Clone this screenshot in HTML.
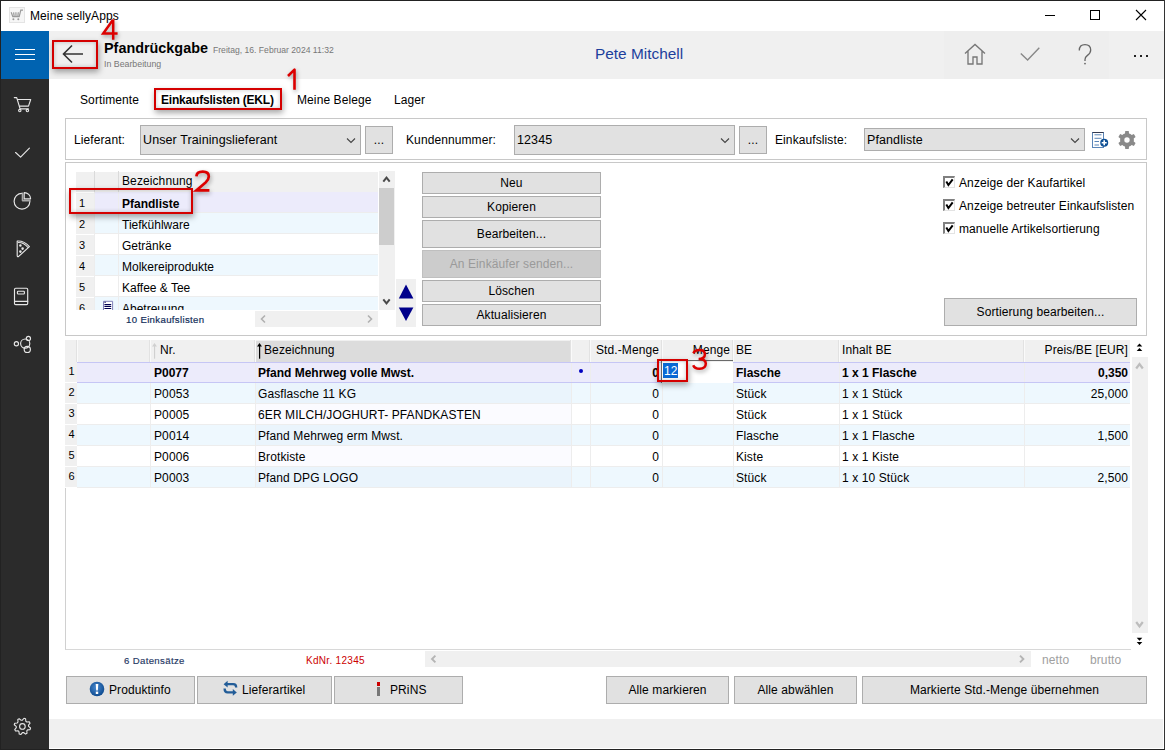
<!DOCTYPE html><html><head><meta charset="utf-8"><style>
html,body{margin:0;padding:0;width:1165px;height:750px;overflow:hidden;}
body{position:relative;font-family:"Liberation Sans", sans-serif;}
body>div{position:absolute;}
</style></head><body>
<div style="left:0px;top:0px;width:1165px;height:750px;background:#fff;"></div>
<svg style="position:absolute;left:9px;top:7px;" width="16" height="16" viewBox="0 0 16 16"><rect x="0.5" y="0.5" width="15" height="15" fill="#f6f6f6" stroke="#e4e4e4"/><path d="M2.2 5.3 L3.8 9.6 L10.2 9.6 L11.8 3.2 L14 3.2 M4.6 5.3 L5.2 9.6 M6.9 5.3 L7 9.6 M9.3 5.3 L8.8 9.6" stroke="#9a9a9a" stroke-width="1.2" fill="none"/><circle cx="4.4" cy="12.2" r="1" fill="#9a9a9a"/><circle cx="9.3" cy="12.2" r="1" fill="#9a9a9a"/></svg>
<div style="left:30px;top:10.00px;font-size:12px;line-height:12px;color:#000;white-space:pre;letter-spacing:0.1px;">Meine sellyApps</div>
<div style="left:1045px;top:15px;width:10px;height:1px;background:#000;"></div>
<div style="left:1090px;top:10px;width:10px;height:10px;border:1px solid #000;box-sizing:border-box;"></div>
<svg style="position:absolute;left:1135px;top:9px;" width="12" height="12" viewBox="0 0 12 12"><path d="M1 1 L11 11 M11 1 L1 11" stroke="#000" stroke-width="1.1"/></svg>
<div style="left:1px;top:31px;width:1163px;height:48px;background:#f0f0f0;"></div>
<div style="left:944px;top:31px;width:165px;height:48px;background:#eeeeee;"></div>
<div style="left:1px;top:31px;width:48px;height:48px;background:#0063b1;"></div>
<div style="left:15px;top:49px;width:20px;height:1px;background:#fff;"></div>
<div style="left:15px;top:54px;width:20px;height:1px;background:#fff;"></div>
<div style="left:15px;top:59px;width:20px;height:1px;background:#fff;"></div>
<svg style="position:absolute;left:60px;top:41px;" width="28" height="26" viewBox="0 0 28 26"><path d="M4 13 L23 13 M12 4.5 L3.5 13 L12 21.5" stroke="#333" stroke-width="1.6" fill="none"/></svg>
<div style="left:104px;top:40.80px;font-size:14.4px;line-height:14.4px;font-weight:bold;color:#000;white-space:pre;">Pfandrückgabe</div>
<div style="left:213px;top:45.70px;font-size:8.6px;line-height:8.6px;color:#777;white-space:pre;">Freitag, 16. Februar 2024 11:32</div>
<div style="left:104px;top:59.60px;font-size:8.8px;line-height:8.8px;color:#777;white-space:pre;">In Bearbeitung</div>
<div style="left:595px;top:46.40px;font-size:15.4px;line-height:15.4px;color:#1d3f9c;white-space:pre;">Pete Mitchell</div>
<svg style="position:absolute;left:962px;top:42px;" width="26" height="25" viewBox="0 0 26 25"><path d="M3 11.5 L13 2.5 L23 11.5 M6 9 L6 22 L11 22 L11 15 L15 15 L15 22 L20 22 L20 9" stroke="#777" stroke-width="1.35" fill="none" stroke-linejoin="miter"/></svg>
<svg style="position:absolute;left:1019px;top:45px;" width="22" height="17" viewBox="0 0 22 17"><path d="M1.8 8.4 L8.6 15 L20.3 2.8" stroke="#888" stroke-width="1.4" fill="none"/></svg>
<svg style="position:absolute;left:1074px;top:40px;" width="22" height="28" viewBox="0 0 22 28"><path d="M5.3 10.5 Q5.3 4.6 11 4.6 Q16.7 4.6 16.7 10 Q16.7 13.2 13.2 15.6 Q11 17.2 11 19.5 L11 21" stroke="#666" stroke-width="1.3" fill="none"/><circle cx="11" cy="23.6" r="0.9" fill="#666"/></svg>
<div style="left:1134px;top:55px;width:2px;height:2px;background:#222;"></div>
<div style="left:1140px;top:55px;width:2px;height:2px;background:#222;"></div>
<div style="left:1146px;top:55px;width:2px;height:2px;background:#222;"></div>
<div style="left:1px;top:79px;width:48px;height:670px;background:#2b2b2b;"></div>
<div style="left:49px;top:719px;width:1114px;height:29px;background:#f0f0f0;"></div>
<div style="left:0px;top:0px;width:1165px;height:1px;background:#222;"></div>
<div style="left:0px;top:0px;width:1px;height:750px;background:#222;"></div>
<div style="left:1164px;top:0px;width:1px;height:750px;background:#333;"></div>
<div style="left:0px;top:749px;width:1165px;height:1px;background:#222;"></div>
<div style="left:80px;top:94.00px;font-size:12px;line-height:12px;color:#000;white-space:pre;letter-spacing:0.1px;">Sortimente</div>
<div style="left:161px;top:94.00px;font-size:12px;line-height:12px;font-weight:bold;color:#000;white-space:pre;letter-spacing:-0.2px;">Einkaufslisten (EKL)</div>
<div style="left:297px;top:94.00px;font-size:12px;line-height:12px;color:#000;white-space:pre;letter-spacing:0.1px;">Meine Belege</div>
<div style="left:394px;top:94.00px;font-size:12px;line-height:12px;color:#000;white-space:pre;letter-spacing:0.1px;">Lager</div>
<div style="left:65px;top:118px;width:1082px;height:42px;border:1px solid #c8c8c8;box-sizing:border-box;"></div>
<div style="left:74px;top:134.00px;font-size:12px;line-height:12px;color:#000;white-space:pre;letter-spacing:0.1px;">Lieferant:</div>
<div style="left:140px;top:125px;width:221px;height:30px;background:#e1e1e1;border:1px solid #adadad;box-sizing:border-box;"></div>
<div style="left:143px;top:134.25px;font-size:12.5px;line-height:12.5px;color:#000;white-space:pre;letter-spacing:0.1px;">Unser Trainingslieferant</div>
<svg style="position:absolute;left:346px;top:137.0px;" width="10" height="7" viewBox="0 0 10 7"><path d="M1 1.5 L5 5.5 L9 1.5" stroke="#444" stroke-width="1.1" fill="none"/></svg>
<div style="left:365px;top:126px;width:28px;height:28px;background:#e1e1e1;border:1px solid #adadad;box-sizing:border-box;"></div>
<div style="left:79.0px;width:600px;text-align:center;top:134.00px;font-size:12px;line-height:12px;color:#000;white-space:pre;letter-spacing:0.1px;">...</div>
<div style="left:406px;top:134.00px;font-size:12px;line-height:12px;color:#000;white-space:pre;letter-spacing:0.1px;">Kundennummer:</div>
<div style="left:514px;top:125px;width:221px;height:30px;background:#e1e1e1;border:1px solid #adadad;box-sizing:border-box;"></div>
<div style="left:517px;top:134.25px;font-size:12.5px;line-height:12.5px;color:#000;white-space:pre;letter-spacing:0.1px;">12345</div>
<svg style="position:absolute;left:720px;top:137.0px;" width="10" height="7" viewBox="0 0 10 7"><path d="M1 1.5 L5 5.5 L9 1.5" stroke="#444" stroke-width="1.1" fill="none"/></svg>
<div style="left:739px;top:126px;width:28px;height:28px;background:#e1e1e1;border:1px solid #adadad;box-sizing:border-box;"></div>
<div style="left:453.0px;width:600px;text-align:center;top:134.00px;font-size:12px;line-height:12px;color:#000;white-space:pre;letter-spacing:0.1px;">...</div>
<div style="left:775px;top:134.00px;font-size:12px;line-height:12px;color:#000;white-space:pre;letter-spacing:0.1px;">Einkaufsliste:</div>
<div style="left:864px;top:128px;width:221px;height:23px;background:#e1e1e1;border:1px solid #adadad;box-sizing:border-box;"></div>
<div style="left:867px;top:133.75px;font-size:12.5px;line-height:12.5px;color:#000;white-space:pre;letter-spacing:0.1px;">Pfandliste</div>
<svg style="position:absolute;left:1070px;top:136.5px;" width="10" height="7" viewBox="0 0 10 7"><path d="M1 1.5 L5 5.5 L9 1.5" stroke="#444" stroke-width="1.1" fill="none"/></svg>
<div style="left:65px;top:162px;width:1082px;height:174px;border:1px solid #c8c8c8;box-sizing:border-box;"></div>
<div style="left:76px;top:172px;width:302px;height:20px;background:#f0f0f0;"></div>
<div style="left:94px;top:171px;width:1px;height:21px;background:#dadada;"></div>
<div style="left:118px;top:171px;width:1px;height:21px;background:#dadada;"></div>
<div style="left:122px;top:175.00px;font-size:12px;line-height:12px;color:#000;white-space:pre;letter-spacing:0.1px;">Bezeichnung</div>
<div style="left:76px;top:171px;width:302px;height:139px;overflow:hidden;"><div style="position:absolute;left:18px;top:21px;width:285px;height:21px;background:#ecebfb;"></div><div style="position:absolute;left:0px;top:21px;width:18px;height:21px;background:#f0f0f0;border-top:1px solid #fff;box-sizing:border-box;"></div><div style="position:absolute;left:18px;top:41px;width:285px;height:1px;background:#ededed;"></div><div style="position:absolute;left:18px;top:21px;width:1px;height:21px;background:#ededed;"></div><div style="position:absolute;left:42px;top:21px;width:1px;height:21px;background:#ededed;"></div><div style="position:absolute;left:3px;top:26.5px;font-size:11px;line-height:11px;">1</div><div style="position:absolute;left:46px;top:27px;font-size:12px;line-height:12px;white-space:pre;font-weight:bold;">Pfandliste</div><div style="position:absolute;left:18px;top:42px;width:285px;height:21px;background:#eef8fe;"></div><div style="position:absolute;left:0px;top:42px;width:18px;height:21px;background:#f0f0f0;border-top:1px solid #fff;box-sizing:border-box;"></div><div style="position:absolute;left:18px;top:62px;width:285px;height:1px;background:#ededed;"></div><div style="position:absolute;left:18px;top:42px;width:1px;height:21px;background:#ededed;"></div><div style="position:absolute;left:42px;top:42px;width:1px;height:21px;background:#ededed;"></div><div style="position:absolute;left:3px;top:47.5px;font-size:11px;line-height:11px;">2</div><div style="position:absolute;left:46px;top:48px;font-size:12px;line-height:12px;white-space:pre;">Tiefkühlware</div><div style="position:absolute;left:18px;top:63px;width:285px;height:21px;background:#fff;"></div><div style="position:absolute;left:0px;top:63px;width:18px;height:21px;background:#f0f0f0;border-top:1px solid #fff;box-sizing:border-box;"></div><div style="position:absolute;left:18px;top:83px;width:285px;height:1px;background:#ededed;"></div><div style="position:absolute;left:18px;top:63px;width:1px;height:21px;background:#ededed;"></div><div style="position:absolute;left:42px;top:63px;width:1px;height:21px;background:#ededed;"></div><div style="position:absolute;left:3px;top:68.5px;font-size:11px;line-height:11px;">3</div><div style="position:absolute;left:46px;top:69px;font-size:12px;line-height:12px;white-space:pre;">Getränke</div><div style="position:absolute;left:18px;top:84px;width:285px;height:21px;background:#eef8fe;"></div><div style="position:absolute;left:0px;top:84px;width:18px;height:21px;background:#f0f0f0;border-top:1px solid #fff;box-sizing:border-box;"></div><div style="position:absolute;left:18px;top:104px;width:285px;height:1px;background:#ededed;"></div><div style="position:absolute;left:18px;top:84px;width:1px;height:21px;background:#ededed;"></div><div style="position:absolute;left:42px;top:84px;width:1px;height:21px;background:#ededed;"></div><div style="position:absolute;left:3px;top:89.5px;font-size:11px;line-height:11px;">4</div><div style="position:absolute;left:46px;top:90px;font-size:12px;line-height:12px;white-space:pre;">Molkereiprodukte</div><div style="position:absolute;left:18px;top:105px;width:285px;height:21px;background:#fff;"></div><div style="position:absolute;left:0px;top:105px;width:18px;height:21px;background:#f0f0f0;border-top:1px solid #fff;box-sizing:border-box;"></div><div style="position:absolute;left:18px;top:125px;width:285px;height:1px;background:#ededed;"></div><div style="position:absolute;left:18px;top:105px;width:1px;height:21px;background:#ededed;"></div><div style="position:absolute;left:42px;top:105px;width:1px;height:21px;background:#ededed;"></div><div style="position:absolute;left:3px;top:110.5px;font-size:11px;line-height:11px;">5</div><div style="position:absolute;left:46px;top:111px;font-size:12px;line-height:12px;white-space:pre;">Kaffee &amp; Tee</div><div style="position:absolute;left:18px;top:126px;width:285px;height:21px;background:#eef8fe;"></div><div style="position:absolute;left:0px;top:126px;width:18px;height:21px;background:#f0f0f0;border-top:1px solid #fff;box-sizing:border-box;"></div><div style="position:absolute;left:18px;top:146px;width:285px;height:1px;background:#ededed;"></div><div style="position:absolute;left:18px;top:126px;width:1px;height:21px;background:#ededed;"></div><div style="position:absolute;left:42px;top:126px;width:1px;height:21px;background:#ededed;"></div><div style="position:absolute;left:3px;top:131.5px;font-size:11px;line-height:11px;">6</div><div style="position:absolute;left:46px;top:132px;font-size:12px;line-height:12px;white-space:pre;">Abetreuung</div><svg style="position:absolute;left:21px;top:129px" width="18" height="12" viewBox="0 0 18 12"><path d="M6.5 11 L6.5 1.3 L15.6 1.3 L15.6 11" fill="#fff" stroke="#8080b8" stroke-width="1"/><path d="M7.4 2.3 L8.8 2.3 M7.4 4.5 L14.2 4.5 M7.4 6.4 L14.2 6.4 M7.4 8.5 L14.2 8.5" stroke="#000050" stroke-width="1.1"/><path d="M1.2 11.4 L5.5 10.6" stroke="#7a7a6a" stroke-width="1.6"/></svg></div>
<div style="left:379px;top:171px;width:16px;height:139px;background:#f0f0f0;"></div>
<div style="left:379px;top:188px;width:15px;height:57px;background:#cdcdcd;"></div>
<svg style="position:absolute;left:379px;top:171px;" width="16" height="16" viewBox="0 0 16 16"><path d="M4.3 10.6 L7.5 6.6 L10.7 10.6" stroke="#4a4a4a" stroke-width="2" fill="none"/></svg>
<svg style="position:absolute;left:379px;top:294px;" width="16" height="16" viewBox="0 0 16 16"><path d="M4.3 5.4 L7.5 9.4 L10.7 5.4" stroke="#4a4a4a" stroke-width="2" fill="none"/></svg>
<div style="left:126px;top:315.20px;font-size:9.6px;line-height:9.6px;color:#14305c;white-space:pre;letter-spacing:0.35px;-webkit-text-stroke:0.2px #14305c;">10 Einkaufslisten</div>
<div style="left:255px;top:311px;width:123px;height:16px;background:#f0f0f0;"></div>
<svg style="position:absolute;left:257px;top:312px;" width="12" height="14" viewBox="0 0 12 14"><path d="M8 3.5 L4.5 7 L8 10.5" stroke="#b0b0b0" stroke-width="1.6" fill="none"/></svg>
<svg style="position:absolute;left:364px;top:312px;" width="12" height="14" viewBox="0 0 12 14"><path d="M4 3.5 L7.5 7 L4 10.5" stroke="#b0b0b0" stroke-width="1.6" fill="none"/></svg>
<div style="left:396px;top:279px;width:20px;height:48px;background:#f0f0f0;"></div>
<svg style="position:absolute;left:396px;top:282px;" width="20" height="20" viewBox="0 0 20 20"><path d="M2.8 16.6 L10 2.5 L17.4 16.6 Z" fill="#00008b"/></svg>
<svg style="position:absolute;left:396px;top:304px;" width="20" height="20" viewBox="0 0 20 20"><path d="M2.8 3.5 L10 17 L17.4 3.5 Z" fill="#00008b"/></svg>
<div style="left:422px;top:172px;width:179px;height:22px;background:#e1e1e1;border:1px solid #adadad;box-sizing:border-box;"></div>
<div style="left:211.5px;width:600px;text-align:center;top:177.00px;font-size:12px;line-height:12px;color:#000;white-space:pre;letter-spacing:0.1px;">Neu</div>
<div style="left:422px;top:196px;width:179px;height:22px;background:#e1e1e1;border:1px solid #adadad;box-sizing:border-box;"></div>
<div style="left:211.5px;width:600px;text-align:center;top:201.00px;font-size:12px;line-height:12px;color:#000;white-space:pre;letter-spacing:0.1px;">Kopieren</div>
<div style="left:422px;top:220px;width:179px;height:28px;background:#e1e1e1;border:1px solid #adadad;box-sizing:border-box;"></div>
<div style="left:211.5px;width:600px;text-align:center;top:228.00px;font-size:12px;line-height:12px;color:#000;white-space:pre;letter-spacing:0.1px;">Bearbeiten...</div>
<div style="left:422px;top:250px;width:179px;height:28px;background:#cccccc;border:1px solid #bfbfbf;box-sizing:border-box;"></div>
<div style="left:211.5px;width:600px;text-align:center;top:258.00px;font-size:12px;line-height:12px;color:#9a9a9a;white-space:pre;letter-spacing:0.1px;">An Einkäufer senden...</div>
<div style="left:422px;top:280px;width:179px;height:22px;background:#e1e1e1;border:1px solid #adadad;box-sizing:border-box;"></div>
<div style="left:211.5px;width:600px;text-align:center;top:285.00px;font-size:12px;line-height:12px;color:#000;white-space:pre;letter-spacing:0.1px;">Löschen</div>
<div style="left:422px;top:304px;width:179px;height:22px;background:#e1e1e1;border:1px solid #adadad;box-sizing:border-box;"></div>
<div style="left:211.5px;width:600px;text-align:center;top:309.00px;font-size:12px;line-height:12px;color:#000;white-space:pre;letter-spacing:0.1px;">Aktualisieren</div>
<div style="left:943px;top:176px;width:12px;height:12px;background:#fff;border-top:2px solid #808080;border-left:2px solid #808080;border-right:1px solid #e3e3e3;border-bottom:1px solid #e3e3e3;box-sizing:border-box;"></div>
<svg style="position:absolute;left:943px;top:176px;" width="12" height="12" viewBox="0 0 12 12"><path d="M3.3 5.5 L5.4 9 L9.7 3.3" stroke="#000" stroke-width="2" fill="none"/></svg>
<div style="left:959px;top:177.00px;font-size:12px;line-height:12px;color:#000;white-space:pre;letter-spacing:0.1px;">Anzeige der Kaufartikel</div>
<div style="left:943px;top:199px;width:12px;height:12px;background:#fff;border-top:2px solid #808080;border-left:2px solid #808080;border-right:1px solid #e3e3e3;border-bottom:1px solid #e3e3e3;box-sizing:border-box;"></div>
<svg style="position:absolute;left:943px;top:199px;" width="12" height="12" viewBox="0 0 12 12"><path d="M3.3 5.5 L5.4 9 L9.7 3.3" stroke="#000" stroke-width="2" fill="none"/></svg>
<div style="left:959px;top:200.00px;font-size:12px;line-height:12px;color:#000;white-space:pre;letter-spacing:0.1px;">Anzeige betreuter Einkaufslisten</div>
<div style="left:943px;top:222px;width:12px;height:12px;background:#fff;border-top:2px solid #808080;border-left:2px solid #808080;border-right:1px solid #e3e3e3;border-bottom:1px solid #e3e3e3;box-sizing:border-box;"></div>
<svg style="position:absolute;left:943px;top:222px;" width="12" height="12" viewBox="0 0 12 12"><path d="M3.3 5.5 L5.4 9 L9.7 3.3" stroke="#000" stroke-width="2" fill="none"/></svg>
<div style="left:959px;top:223.00px;font-size:12px;line-height:12px;color:#000;white-space:pre;letter-spacing:0.1px;">manuelle Artikelsortierung</div>
<div style="left:944px;top:298px;width:193px;height:28px;background:#e1e1e1;border:1px solid #adadad;box-sizing:border-box;"></div>
<div style="left:740.5px;width:600px;text-align:center;top:306.00px;font-size:12px;line-height:12px;color:#000;white-space:pre;letter-spacing:0.1px;">Sortierung bearbeiten...</div>
<div style="left:65px;top:340px;width:1066px;height:310px;border-left:1px solid #d0d0d0;border-bottom:1px solid #d8d8d8;box-sizing:border-box;"></div>
<div style="left:65px;top:340px;width:1065px;height:22px;background:#f0f0f0;"></div>
<div style="left:256px;top:341px;width:315px;height:21px;background:#dcdcdc;"></div>
<div style="left:76px;top:340px;width:1px;height:22px;background:#e2e2e2;"></div>
<div style="left:77px;top:340px;width:1px;height:22px;background:#fafafa;"></div>
<div style="left:149px;top:340px;width:1px;height:22px;background:#e2e2e2;"></div>
<div style="left:150px;top:340px;width:1px;height:22px;background:#fafafa;"></div>
<div style="left:254px;top:340px;width:1px;height:22px;background:#e2e2e2;"></div>
<div style="left:255px;top:340px;width:1px;height:22px;background:#fafafa;"></div>
<div style="left:570px;top:340px;width:1px;height:22px;background:#e2e2e2;"></div>
<div style="left:571px;top:340px;width:1px;height:22px;background:#fafafa;"></div>
<div style="left:589px;top:340px;width:1px;height:22px;background:#e2e2e2;"></div>
<div style="left:590px;top:340px;width:1px;height:22px;background:#fafafa;"></div>
<div style="left:661px;top:340px;width:1px;height:22px;background:#e2e2e2;"></div>
<div style="left:662px;top:340px;width:1px;height:22px;background:#fafafa;"></div>
<div style="left:732px;top:340px;width:1px;height:22px;background:#e2e2e2;"></div>
<div style="left:733px;top:340px;width:1px;height:22px;background:#fafafa;"></div>
<div style="left:838px;top:340px;width:1px;height:22px;background:#e2e2e2;"></div>
<div style="left:839px;top:340px;width:1px;height:22px;background:#fafafa;"></div>
<div style="left:1023px;top:340px;width:1px;height:22px;background:#e2e2e2;"></div>
<div style="left:1024px;top:340px;width:1px;height:22px;background:#fafafa;"></div>
<div style="left:160px;top:344.00px;font-size:12px;line-height:12px;color:#000;white-space:pre;letter-spacing:0.1px;">Nr.</div>
<svg style="position:absolute;left:150px;top:340px;" width="10" height="20" viewBox="0 0 10 20"><path d="M2 6.6 L4.5 3 L7 6.6 Z" fill="#d0d0d0"/><rect x="4" y="5" width="1.1" height="13.7" fill="#d0d0d0"/></svg>
<svg style="position:absolute;left:255px;top:340px;" width="10" height="20" viewBox="0 0 10 20"><path d="M2 6.6 L4.5 3 L7 6.6 Z" fill="#000"/><rect x="4" y="5" width="1.2" height="13.7" fill="#000"/></svg>
<div style="left:264px;top:344.00px;font-size:12px;line-height:12px;color:#000;white-space:pre;letter-spacing:0.1px;">Bezeichnung</div>
<div style="left:59px;width:600px;text-align:right;top:344.00px;font-size:12px;line-height:12px;color:#000;white-space:pre;letter-spacing:0.1px;">Std.-Menge</div>
<div style="left:130px;width:600px;text-align:right;top:344.00px;font-size:12px;line-height:12px;color:#000;white-space:pre;letter-spacing:0.1px;">Menge</div>
<div style="left:736px;top:344.00px;font-size:12px;line-height:12px;color:#000;white-space:pre;letter-spacing:0.1px;">BE</div>
<div style="left:842px;top:344.00px;font-size:12px;line-height:12px;color:#000;white-space:pre;letter-spacing:0.1px;">Inhalt BE</div>
<div style="left:528px;width:600px;text-align:right;top:344.00px;font-size:12px;line-height:12px;color:#000;white-space:pre;letter-spacing:0.1px;">Preis/BE [EUR]</div>
<div style="left:77px;top:362px;width:1053px;height:21px;background:#ecebfb;"></div>
<div style="left:255px;top:362px;width:316px;height:21px;background:#ecebfb;"></div>
<div style="left:77px;top:382px;width:1053px;height:1px;background:#ededed;"></div>
<div style="left:65px;top:362px;width:12px;height:21px;background:#f0f0f0;"></div>
<div style="left:65px;top:382px;width:12px;height:1px;background:#fff;"></div>
<div style="left:150px;top:362px;width:1px;height:21px;background:#ededed;"></div>
<div style="left:255px;top:362px;width:1px;height:21px;background:#ededed;"></div>
<div style="left:571px;top:362px;width:1px;height:21px;background:#ededed;"></div>
<div style="left:590px;top:362px;width:1px;height:21px;background:#ededed;"></div>
<div style="left:662px;top:362px;width:1px;height:21px;background:#ededed;"></div>
<div style="left:733px;top:362px;width:1px;height:21px;background:#ededed;"></div>
<div style="left:839px;top:362px;width:1px;height:21px;background:#ededed;"></div>
<div style="left:1024px;top:362px;width:1px;height:21px;background:#ededed;"></div>
<div style="left:68.5px;top:365.50px;font-size:11px;line-height:11px;color:#000;white-space:pre;">1</div>
<div style="left:154px;top:367.00px;font-size:12px;line-height:12px;font-weight:bold;color:#000;white-space:pre;">P0077</div>
<div style="left:258px;top:367.00px;font-size:12px;line-height:12px;font-weight:bold;color:#000;white-space:pre;">Pfand Mehrweg volle Mwst.</div>
<div style="left:59px;width:600px;text-align:right;top:367.00px;font-size:12px;line-height:12px;font-weight:bold;color:#000;white-space:pre;">0</div>
<div style="left:736px;top:367.00px;font-size:12px;line-height:12px;font-weight:bold;color:#000;white-space:pre;">Flasche</div>
<div style="left:842px;top:367.00px;font-size:12px;line-height:12px;font-weight:bold;color:#000;white-space:pre;">1 x 1 Flasche</div>
<div style="left:528px;width:600px;text-align:right;top:367.00px;font-size:12px;line-height:12px;font-weight:bold;color:#000;white-space:pre;">0,350</div>
<div style="left:77px;top:383px;width:1053px;height:21px;background:#eef8fe;"></div>
<div style="left:255px;top:383px;width:316px;height:21px;background:#eaf4fc;"></div>
<div style="left:77px;top:403px;width:1053px;height:1px;background:#ededed;"></div>
<div style="left:65px;top:383px;width:12px;height:21px;background:#f0f0f0;"></div>
<div style="left:65px;top:403px;width:12px;height:1px;background:#fff;"></div>
<div style="left:150px;top:383px;width:1px;height:21px;background:#ededed;"></div>
<div style="left:255px;top:383px;width:1px;height:21px;background:#ededed;"></div>
<div style="left:571px;top:383px;width:1px;height:21px;background:#ededed;"></div>
<div style="left:590px;top:383px;width:1px;height:21px;background:#ededed;"></div>
<div style="left:662px;top:383px;width:1px;height:21px;background:#ededed;"></div>
<div style="left:733px;top:383px;width:1px;height:21px;background:#ededed;"></div>
<div style="left:839px;top:383px;width:1px;height:21px;background:#ededed;"></div>
<div style="left:1024px;top:383px;width:1px;height:21px;background:#ededed;"></div>
<div style="left:68.5px;top:386.50px;font-size:11px;line-height:11px;color:#000;white-space:pre;">2</div>
<div style="left:154px;top:388.00px;font-size:12px;line-height:12px;color:#000;white-space:pre;letter-spacing:0.1px;">P0053</div>
<div style="left:258px;top:388.00px;font-size:12px;line-height:12px;color:#000;white-space:pre;letter-spacing:0.1px;">Gasflasche 11 KG</div>
<div style="left:59px;width:600px;text-align:right;top:388.00px;font-size:12px;line-height:12px;color:#000;white-space:pre;letter-spacing:0.1px;">0</div>
<div style="left:736px;top:388.00px;font-size:12px;line-height:12px;color:#000;white-space:pre;letter-spacing:0.1px;">Stück</div>
<div style="left:842px;top:388.00px;font-size:12px;line-height:12px;color:#000;white-space:pre;letter-spacing:0.1px;">1 x 1 Stück</div>
<div style="left:528px;width:600px;text-align:right;top:388.00px;font-size:12px;line-height:12px;color:#000;white-space:pre;letter-spacing:0.1px;">25,000</div>
<div style="left:77px;top:404px;width:1053px;height:21px;background:#fff;"></div>
<div style="left:255px;top:404px;width:316px;height:21px;background:#fbfbff;"></div>
<div style="left:77px;top:424px;width:1053px;height:1px;background:#ededed;"></div>
<div style="left:65px;top:404px;width:12px;height:21px;background:#f0f0f0;"></div>
<div style="left:65px;top:424px;width:12px;height:1px;background:#fff;"></div>
<div style="left:150px;top:404px;width:1px;height:21px;background:#ededed;"></div>
<div style="left:255px;top:404px;width:1px;height:21px;background:#ededed;"></div>
<div style="left:571px;top:404px;width:1px;height:21px;background:#ededed;"></div>
<div style="left:590px;top:404px;width:1px;height:21px;background:#ededed;"></div>
<div style="left:662px;top:404px;width:1px;height:21px;background:#ededed;"></div>
<div style="left:733px;top:404px;width:1px;height:21px;background:#ededed;"></div>
<div style="left:839px;top:404px;width:1px;height:21px;background:#ededed;"></div>
<div style="left:1024px;top:404px;width:1px;height:21px;background:#ededed;"></div>
<div style="left:68.5px;top:407.50px;font-size:11px;line-height:11px;color:#000;white-space:pre;">3</div>
<div style="left:154px;top:409.00px;font-size:12px;line-height:12px;color:#000;white-space:pre;letter-spacing:0.1px;">P0005</div>
<div style="left:258px;top:409.00px;font-size:12px;line-height:12px;color:#000;white-space:pre;letter-spacing:0.1px;">6ER MILCH/JOGHURT- PFANDKASTEN</div>
<div style="left:59px;width:600px;text-align:right;top:409.00px;font-size:12px;line-height:12px;color:#000;white-space:pre;letter-spacing:0.1px;">0</div>
<div style="left:736px;top:409.00px;font-size:12px;line-height:12px;color:#000;white-space:pre;letter-spacing:0.1px;">Stück</div>
<div style="left:842px;top:409.00px;font-size:12px;line-height:12px;color:#000;white-space:pre;letter-spacing:0.1px;">1 x 1 Stück</div>
<div style="left:528px;width:600px;text-align:right;top:409.00px;font-size:12px;line-height:12px;color:#000;white-space:pre;letter-spacing:0.1px;"></div>
<div style="left:77px;top:425px;width:1053px;height:21px;background:#eef8fe;"></div>
<div style="left:255px;top:425px;width:316px;height:21px;background:#eaf4fc;"></div>
<div style="left:77px;top:445px;width:1053px;height:1px;background:#ededed;"></div>
<div style="left:65px;top:425px;width:12px;height:21px;background:#f0f0f0;"></div>
<div style="left:65px;top:445px;width:12px;height:1px;background:#fff;"></div>
<div style="left:150px;top:425px;width:1px;height:21px;background:#ededed;"></div>
<div style="left:255px;top:425px;width:1px;height:21px;background:#ededed;"></div>
<div style="left:571px;top:425px;width:1px;height:21px;background:#ededed;"></div>
<div style="left:590px;top:425px;width:1px;height:21px;background:#ededed;"></div>
<div style="left:662px;top:425px;width:1px;height:21px;background:#ededed;"></div>
<div style="left:733px;top:425px;width:1px;height:21px;background:#ededed;"></div>
<div style="left:839px;top:425px;width:1px;height:21px;background:#ededed;"></div>
<div style="left:1024px;top:425px;width:1px;height:21px;background:#ededed;"></div>
<div style="left:68.5px;top:428.50px;font-size:11px;line-height:11px;color:#000;white-space:pre;">4</div>
<div style="left:154px;top:430.00px;font-size:12px;line-height:12px;color:#000;white-space:pre;letter-spacing:0.1px;">P0014</div>
<div style="left:258px;top:430.00px;font-size:12px;line-height:12px;color:#000;white-space:pre;letter-spacing:0.1px;">Pfand Mehrweg erm Mwst.</div>
<div style="left:59px;width:600px;text-align:right;top:430.00px;font-size:12px;line-height:12px;color:#000;white-space:pre;letter-spacing:0.1px;">0</div>
<div style="left:736px;top:430.00px;font-size:12px;line-height:12px;color:#000;white-space:pre;letter-spacing:0.1px;">Flasche</div>
<div style="left:842px;top:430.00px;font-size:12px;line-height:12px;color:#000;white-space:pre;letter-spacing:0.1px;">1 x 1 Flasche</div>
<div style="left:528px;width:600px;text-align:right;top:430.00px;font-size:12px;line-height:12px;color:#000;white-space:pre;letter-spacing:0.1px;">1,500</div>
<div style="left:77px;top:446px;width:1053px;height:21px;background:#fff;"></div>
<div style="left:255px;top:446px;width:316px;height:21px;background:#fbfbff;"></div>
<div style="left:77px;top:466px;width:1053px;height:1px;background:#ededed;"></div>
<div style="left:65px;top:446px;width:12px;height:21px;background:#f0f0f0;"></div>
<div style="left:65px;top:466px;width:12px;height:1px;background:#fff;"></div>
<div style="left:150px;top:446px;width:1px;height:21px;background:#ededed;"></div>
<div style="left:255px;top:446px;width:1px;height:21px;background:#ededed;"></div>
<div style="left:571px;top:446px;width:1px;height:21px;background:#ededed;"></div>
<div style="left:590px;top:446px;width:1px;height:21px;background:#ededed;"></div>
<div style="left:662px;top:446px;width:1px;height:21px;background:#ededed;"></div>
<div style="left:733px;top:446px;width:1px;height:21px;background:#ededed;"></div>
<div style="left:839px;top:446px;width:1px;height:21px;background:#ededed;"></div>
<div style="left:1024px;top:446px;width:1px;height:21px;background:#ededed;"></div>
<div style="left:68.5px;top:449.50px;font-size:11px;line-height:11px;color:#000;white-space:pre;">5</div>
<div style="left:154px;top:451.00px;font-size:12px;line-height:12px;color:#000;white-space:pre;letter-spacing:0.1px;">P0006</div>
<div style="left:258px;top:451.00px;font-size:12px;line-height:12px;color:#000;white-space:pre;letter-spacing:0.1px;">Brotkiste</div>
<div style="left:59px;width:600px;text-align:right;top:451.00px;font-size:12px;line-height:12px;color:#000;white-space:pre;letter-spacing:0.1px;">0</div>
<div style="left:736px;top:451.00px;font-size:12px;line-height:12px;color:#000;white-space:pre;letter-spacing:0.1px;">Kiste</div>
<div style="left:842px;top:451.00px;font-size:12px;line-height:12px;color:#000;white-space:pre;letter-spacing:0.1px;">1 x 1 Kiste</div>
<div style="left:528px;width:600px;text-align:right;top:451.00px;font-size:12px;line-height:12px;color:#000;white-space:pre;letter-spacing:0.1px;"></div>
<div style="left:77px;top:467px;width:1053px;height:21px;background:#eef8fe;"></div>
<div style="left:255px;top:467px;width:316px;height:21px;background:#eaf4fc;"></div>
<div style="left:77px;top:487px;width:1053px;height:1px;background:#ededed;"></div>
<div style="left:65px;top:467px;width:12px;height:21px;background:#f0f0f0;"></div>
<div style="left:65px;top:487px;width:12px;height:1px;background:#fff;"></div>
<div style="left:150px;top:467px;width:1px;height:21px;background:#ededed;"></div>
<div style="left:255px;top:467px;width:1px;height:21px;background:#ededed;"></div>
<div style="left:571px;top:467px;width:1px;height:21px;background:#ededed;"></div>
<div style="left:590px;top:467px;width:1px;height:21px;background:#ededed;"></div>
<div style="left:662px;top:467px;width:1px;height:21px;background:#ededed;"></div>
<div style="left:733px;top:467px;width:1px;height:21px;background:#ededed;"></div>
<div style="left:839px;top:467px;width:1px;height:21px;background:#ededed;"></div>
<div style="left:1024px;top:467px;width:1px;height:21px;background:#ededed;"></div>
<div style="left:68.5px;top:470.50px;font-size:11px;line-height:11px;color:#000;white-space:pre;">6</div>
<div style="left:154px;top:472.00px;font-size:12px;line-height:12px;color:#000;white-space:pre;letter-spacing:0.1px;">P0003</div>
<div style="left:258px;top:472.00px;font-size:12px;line-height:12px;color:#000;white-space:pre;letter-spacing:0.1px;">Pfand DPG LOGO</div>
<div style="left:59px;width:600px;text-align:right;top:472.00px;font-size:12px;line-height:12px;color:#000;white-space:pre;letter-spacing:0.1px;">0</div>
<div style="left:736px;top:472.00px;font-size:12px;line-height:12px;color:#000;white-space:pre;letter-spacing:0.1px;">Stück</div>
<div style="left:842px;top:472.00px;font-size:12px;line-height:12px;color:#000;white-space:pre;letter-spacing:0.1px;">1 x 10 Stück</div>
<div style="left:528px;width:600px;text-align:right;top:472.00px;font-size:12px;line-height:12px;color:#000;white-space:pre;letter-spacing:0.1px;">2,500</div>
<div style="left:77px;top:362px;width:1053px;height:1px;background:#c6c6f5;"></div>
<div style="left:77px;top:382px;width:1053px;height:1px;background:#c6c6f5;"></div>
<div style="left:579px;top:369px;width:4px;height:4px;background:#0000c0;border-radius:50%;"></div>
<div style="left:662px;top:362px;width:71px;height:21px;background:#fff;"></div>
<div style="left:661px;top:360px;width:72px;height:1px;background:#6a6a6a;"></div>
<div style="left:661px;top:360px;width:1px;height:23px;background:#6a6a6a;"></div>
<div style="left:663px;top:363px;width:15px;height:15px;background:#0a6ad6;"></div>
<div style="left:664px;top:364.50px;font-size:12px;line-height:12px;color:#fff;white-space:pre;letter-spacing:0.1px;">12</div>
<div style="left:1132px;top:357px;width:16px;height:276px;background:#f0f0f0;"></div>
<svg style="position:absolute;left:1132px;top:357px;" width="16" height="20" viewBox="0 0 16 20"><path d="M4.2 11.5 L7.5 7 L10.8 11.5" stroke="#bdbdbd" stroke-width="2.2" fill="none"/></svg>
<svg style="position:absolute;left:1132px;top:614px;" width="16" height="20" viewBox="0 0 16 20"><path d="M4.2 8 L7.5 12.5 L10.8 8" stroke="#bdbdbd" stroke-width="2.2" fill="none"/></svg>
<svg style="position:absolute;left:1134px;top:341px;" width="12" height="12" viewBox="0 0 12 12"><path d="M2.7 5.6 L5.5 2.6 L8.3 5.6 Z M2.7 9.9 L5.5 6.9 L8.3 9.9 Z" fill="#000"/></svg>
<svg style="position:absolute;left:1134px;top:635px;" width="12" height="12" viewBox="0 0 12 12"><path d="M2.7 2.8 L5.5 5.8 L8.3 2.8 Z M2.7 7 L5.5 10 L8.3 7 Z" fill="#000"/></svg>
<div style="left:124px;top:655.70px;font-size:9.6px;line-height:9.6px;color:#1f3864;white-space:pre;letter-spacing:0.35px;-webkit-text-stroke:0.15px #1f3864;">6 Datensätze</div>
<div style="left:306px;top:655.50px;font-size:10px;line-height:10px;color:#cc0000;white-space:pre;letter-spacing:0.3px;">KdNr. 12345</div>
<div style="left:425px;top:651px;width:606px;height:16px;background:#f0f0f0;"></div>
<svg style="position:absolute;left:427px;top:652px;" width="12" height="14" viewBox="0 0 12 14"><path d="M8.4 3.6 L5 7 L8.4 10.4" stroke="#b4b4b4" stroke-width="1.9" fill="none"/></svg>
<svg style="position:absolute;left:1016px;top:652px;" width="12" height="14" viewBox="0 0 12 14"><path d="M4 3.6 L7.4 7 L4 10.4" stroke="#b4b4b4" stroke-width="1.9" fill="none"/></svg>
<div style="left:1042px;top:654.00px;font-size:12px;line-height:12px;color:#a0a0a0;white-space:pre;letter-spacing:0.1px;">netto</div>
<div style="left:1090px;top:654.00px;font-size:12px;line-height:12px;color:#a0a0a0;white-space:pre;letter-spacing:0.1px;">brutto</div>
<div style="left:66px;top:676px;width:129px;height:28px;background:#e1e1e1;border:1px solid #adadad;box-sizing:border-box;"></div>
<svg style="position:absolute;left:88px;top:680px;" width="18" height="18" viewBox="0 0 18 18"><defs><radialGradient id="gi" cx="0.45" cy="0.4" r="0.6"><stop offset="0" stop-color="#4a8ad0"/><stop offset="1" stop-color="#0d4a8f"/></radialGradient></defs><circle cx="9" cy="9" r="7.3" fill="url(#gi)"/><path d="M7.7 4 L10.3 4 L9.8 10.4 L8.2 10.4 Z" fill="#fff"/><rect x="7.8" y="11.6" width="2.4" height="2.4" fill="#fff"/></svg>
<div style="left:109px;top:684.00px;font-size:12px;line-height:12px;color:#000;white-space:pre;letter-spacing:0.1px;">Produktinfo</div>
<div style="left:197px;top:676px;width:135px;height:28px;background:#e1e1e1;border:1px solid #adadad;box-sizing:border-box;"></div>
<svg style="position:absolute;left:221px;top:680px;" width="18" height="17" viewBox="0 0 18 17"><g fill="#235d98"><path d="M2.6 4.2 L6.6 0.8 L6.6 7.6 Z"/><path d="M15.8 12.4 L11.8 9 L11.8 15.8 Z"/></g><g stroke="#235d98" stroke-width="2.3" fill="none"><path d="M6 4.2 L12.2 4.2 Q15.2 4.2 15.2 7.4"/><path d="M3.6 8.6 Q3.6 12.4 6.6 12.4 L12.4 12.4"/></g></svg>
<div style="left:242px;top:684.00px;font-size:12px;line-height:12px;color:#000;white-space:pre;letter-spacing:0.1px;">Lieferartikel</div>
<div style="left:334px;top:676px;width:129px;height:28px;background:#e1e1e1;border:1px solid #adadad;box-sizing:border-box;"></div>
<div style="left:377px;top:682px;width:3px;height:4px;background:#cc0000;"></div>
<div style="left:377px;top:687px;width:3px;height:9px;background:#777;"></div>
<div style="left:390px;top:684.00px;font-size:12px;line-height:12px;color:#000;white-space:pre;letter-spacing:0.1px;">PRiNS</div>
<div style="left:606px;top:676px;width:123px;height:28px;background:#e1e1e1;border:1px solid #adadad;box-sizing:border-box;"></div>
<div style="left:367.5px;width:600px;text-align:center;top:684.00px;font-size:12px;line-height:12px;color:#000;white-space:pre;letter-spacing:0.1px;">Alle markieren</div>
<div style="left:734px;top:676px;width:123px;height:28px;background:#e1e1e1;border:1px solid #adadad;box-sizing:border-box;"></div>
<div style="left:495.5px;width:600px;text-align:center;top:684.00px;font-size:12px;line-height:12px;color:#000;white-space:pre;letter-spacing:0.1px;">Alle abwählen</div>
<div style="left:862px;top:676px;width:285px;height:28px;background:#e1e1e1;border:1px solid #adadad;box-sizing:border-box;"></div>
<div style="left:704.5px;width:600px;text-align:center;top:684.00px;font-size:12px;line-height:12px;color:#000;white-space:pre;letter-spacing:0.1px;">Markierte Std.-Menge übernehmen</div>
<svg style="position:absolute;left:0px;top:80px;" width="50" height="670" viewBox="0 0 50 670"><g stroke="#e6e6e6" stroke-width="1.15" fill="none" stroke-linecap="round" stroke-linejoin="round" transform="translate(0,-80)">
<path d="M14.3 97.6 L16.7 97.6 L20.1 108.8 L28.4 108.8 M17.3 99.5 L30.7 99.5 L28.5 106.1 L19.6 106.1"/>
<circle cx="19.8" cy="110.5" r="1.2"/><circle cx="27.4" cy="110.5" r="1.2"/>
<path d="M15.6 152.5 L20.6 157.2 L29.4 148.2"/>
<path d="M22 193.3 A7.9 7.9 0 1 0 29.9 201.2"/>
<path d="M22.5 193.3 L22.5 200.6 L29.9 200.6" stroke="#aaa" stroke-width="1.6"/>
<path d="M24.2 192.6 L24.2 198.8 L30.6 198.8 A6.4 6.2 0 0 0 24.2 192.6 Z"/>
<path d="M17.2 241 Q24 240.5 29.4 246.6 L18.4 256.6 Q17.2 257 17.2 255.5 Z M18.5 242.5 Q24 242.5 28 247.5"/>
<circle cx="20.4" cy="245.4" r="0.7" fill="#e6e6e6"/><circle cx="22.6" cy="248.6" r="0.7" fill="#e6e6e6"/><circle cx="20.4" cy="251.6" r="0.7" fill="#e6e6e6"/>
<rect x="14.5" y="288.2" width="13.2" height="16.4" rx="1.2"/>
<path d="M14.5 301.4 L27.7 301.4"/>
<rect x="17.4" y="291.2" width="7" height="2.8" rx="0.8"/>
<circle cx="16.4" cy="343.8" r="2.1"/><circle cx="25.2" cy="343.6" r="4.6"/><circle cx="28.4" cy="338.4" r="2.1"/><circle cx="27.3" cy="349.4" r="3.1"/>
</g></svg>
<svg style="position:absolute;left:0px;top:711px;" width="50" height="30" viewBox="0 0 50 30"><path d="M22.40 9.20 L24.02 7.26 L25.58 7.73 L25.84 10.24 L26.78 11.02 L29.30 10.79 L30.07 12.22 L28.48 14.19 L28.60 15.40 L30.54 17.02 L30.07 18.58 L27.56 18.84 L26.78 19.78 L27.01 22.30 L25.58 23.07 L23.61 21.48 L22.40 21.60 L20.78 23.54 L19.22 23.07 L18.96 20.56 L18.02 19.78 L15.50 20.01 L14.73 18.58 L16.32 16.61 L16.20 15.40 L14.26 13.78 L14.73 12.22 L17.24 11.96 L18.02 11.02 L17.79 8.50 L19.22 7.73 L21.19 9.32 Z" stroke="#e6e6e6" stroke-width="1.1" fill="none" stroke-linejoin="round"/><circle cx="22.4" cy="15.4" r="2.8" stroke="#e6e6e6" stroke-width="1.1" fill="none"/></svg>
<svg style="position:absolute;left:1090px;top:130px;" width="20" height="20" viewBox="0 0 20 20"><rect x="2.5" y="2.5" width="11" height="15" fill="#fff" stroke="#5b86b8" stroke-width="1"/><path d="M2.5 2.5 L13.5 2.5" stroke="#333a50" stroke-width="1"/><path d="M4.5 4.8 L11.5 4.8 M4.5 8.3 L11.5 8.3 M4.5 11.5 L9 11.5 M4.5 15 L9 15" stroke="#5b86b8" stroke-width="1"/><circle cx="14.2" cy="12.8" r="4" fill="#0d4f94"/><path d="M14.2 10.3 L14.2 15.3 M11.7 12.8 L16.7 12.8" stroke="#fff" stroke-width="1.6"/></svg>
<svg style="position:absolute;left:1117px;top:130px;" width="20" height="20" viewBox="0 0 20 20"><path d="M6.55 4.02 L7.98 3.40 L8.26 1.07 L11.74 1.07 L12.02 3.40 L13.45 4.02 L14.71 4.95 L16.87 4.03 L18.60 7.04 L16.72 8.45 L16.90 10.00 L16.72 11.55 L18.60 12.96 L16.87 15.97 L14.71 15.05 L13.45 15.98 L12.02 16.60 L11.74 18.93 L8.26 18.93 L7.98 16.60 L6.55 15.98 L5.29 15.05 L3.13 15.97 L1.40 12.96 L3.28 11.55 L3.10 10.00 L3.28 8.45 L1.40 7.04 L3.13 4.03 L5.29 4.95 Z" fill="#8a8a8a"/><circle cx="10" cy="10" r="2.7" fill="#fff"/></svg>
<div style="left:52px;top:40px;width:46px;height:29px;border:2px solid #d40000;box-sizing:border-box;box-shadow:1px 3px 6px rgba(0,0,0,0.35), inset 0 0 4px rgba(0,0,0,0.22);"></div>
<div style="left:154px;top:88px;width:128px;height:22px;border:2px solid #d40000;box-sizing:border-box;box-shadow:1px 3px 6px rgba(0,0,0,0.35), inset 0 0 4px rgba(0,0,0,0.22);"></div>
<div style="left:69px;top:188px;width:124px;height:26px;border:2px solid #d40000;box-sizing:border-box;box-shadow:1px 3px 6px rgba(0,0,0,0.35), inset 0 0 4px rgba(0,0,0,0.22);"></div>
<div style="left:657px;top:359px;width:31px;height:23px;border:2px solid #d40000;box-sizing:border-box;box-shadow:1px 3px 6px rgba(0,0,0,0.35), inset 0 0 4px rgba(0,0,0,0.22);"></div>
<svg style="position:absolute;left:96px;top:12px;filter:drop-shadow(1px 2px 2px rgba(0,0,0,0.35));" width="30" height="34" viewBox="0 0 30 34"><path d="M17 7.8 L7.2 21.6 L21.6 21.6 M17.2 7.4 L17.2 27.8" stroke="#dc0000" stroke-width="2.5" fill="none" stroke-linejoin="miter"/></svg>
<svg style="position:absolute;left:280px;top:62px;filter:drop-shadow(1px 2px 2px rgba(0,0,0,0.35));" width="24" height="34" viewBox="0 0 24 34"><path d="M8 14 L14.5 7.6 L14.5 27.8" stroke="#dc0000" stroke-width="2.6" fill="none" stroke-linejoin="round"/></svg>
<svg style="position:absolute;left:190px;top:166px;filter:drop-shadow(1px 2px 2px rgba(0,0,0,0.35));" width="24" height="30" viewBox="0 0 24 30"><path d="M6.4 10.4 Q6.5 5.6 12.8 5.6 Q18.8 5.6 18.8 10.6 Q18.8 13.6 15.6 16.6 L6.4 24.4 L19.4 24.4" stroke="#dc0000" stroke-width="2.7" fill="none" stroke-linejoin="miter"/></svg>
<svg style="position:absolute;left:686px;top:344px;filter:drop-shadow(1px 2px 2px rgba(0,0,0,0.35));" width="24" height="30" viewBox="0 0 24 30"><path d="M7.4 9.2 Q8.6 5.9 13.4 5.9 Q18.9 5.9 18.9 10.3 Q18.9 14.9 12.6 14.9 Q19.8 14.9 19.8 19.6 Q19.8 24.8 13.6 24.8 Q8.6 24.8 7.2 21.2" stroke="#dc0000" stroke-width="2.5" fill="none"/></svg>
</body></html>
